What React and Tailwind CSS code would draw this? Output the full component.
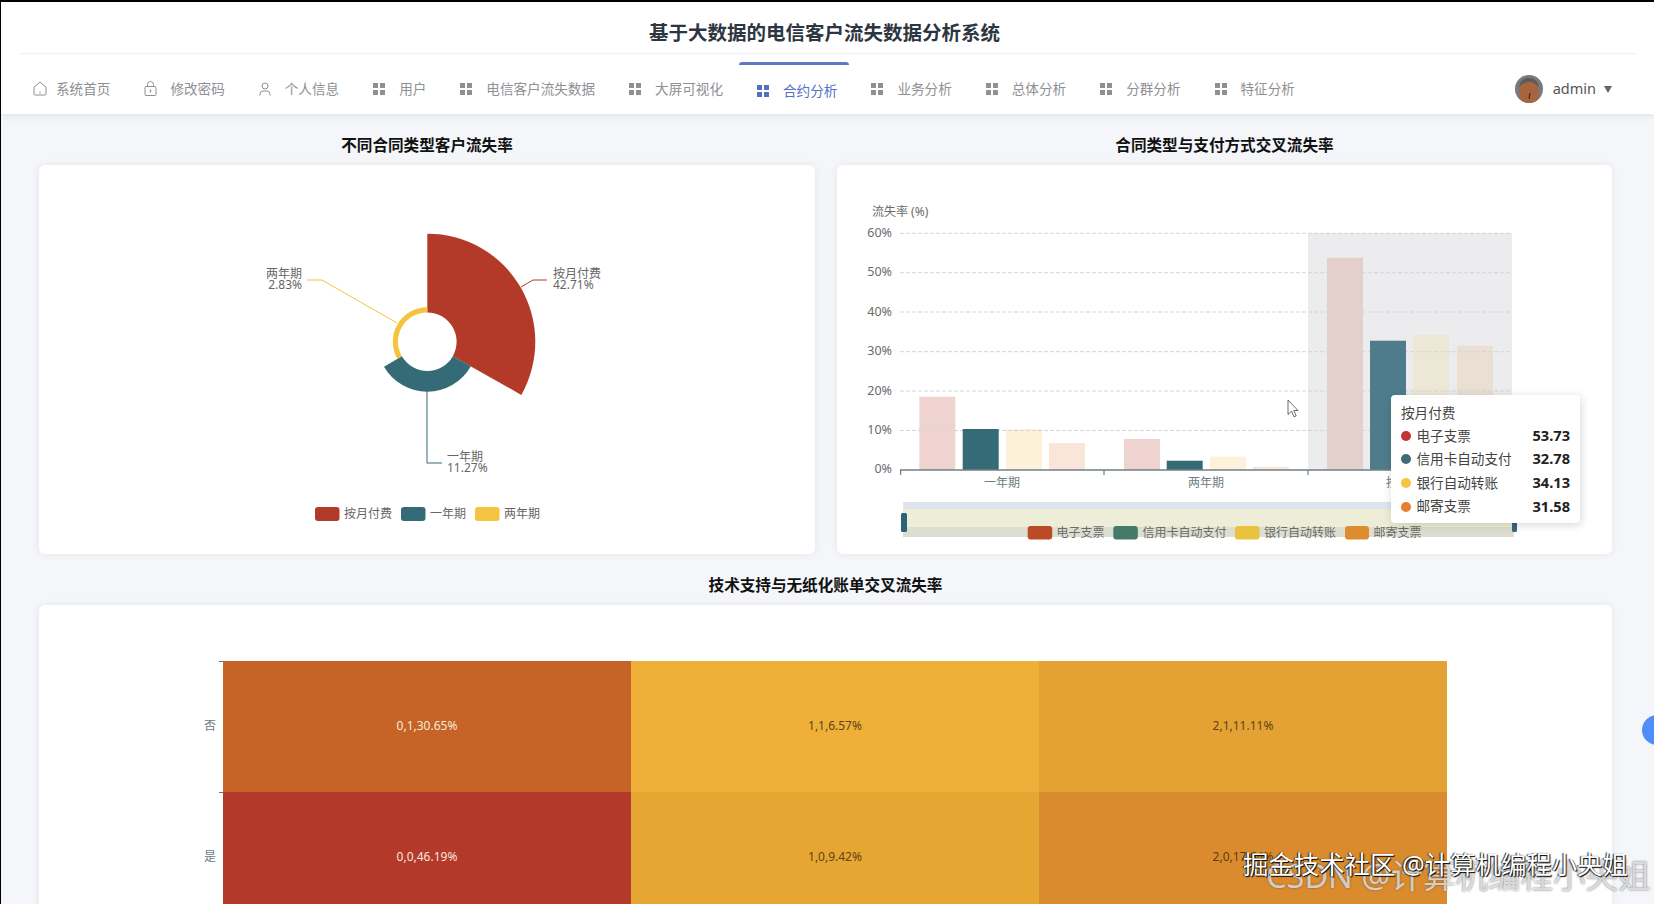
import React from "react";

const CJK = "font-['Noto_Sans','Noto_Sans_CJK_SC',sans-serif]";

function polar(cx, cy, r, deg) {
  const a = (deg * Math.PI) / 180;
  return [cx + r * Math.sin(a), cy - r * Math.cos(a)];
}
function sector(cx, cy, r0, r1, a0, a1) {
  const [x0, y0] = polar(cx, cy, r1, a0);
  const [x1, y1] = polar(cx, cy, r1, a1);
  const [x2, y2] = polar(cx, cy, r0, a1);
  const [x3, y3] = polar(cx, cy, r0, a0);
  return `M${x0} ${y0}A${r1} ${r1} 0 0 1 ${x1} ${y1}L${x2} ${y2}A${r0} ${r0} 0 0 0 ${x3} ${y3}Z`;
}

function GridIcon({ active }) {
  const c = active ? "bg-[#5470c6]" : "bg-[#8e9094]";
  return (
    <span className="grid grid-cols-[5px_5px] grid-rows-[5px_5px] gap-[2px] w-3 h-3 shrink-0">
      <i className={c} />
      <i className={c} />
      <i className={c} />
      <i className={c} />
    </span>
  );
}

function HomeIcon() {
  return (
    <svg width="14" height="15" viewBox="0 0 14 15" fill="none" stroke="#8e9094" strokeWidth="1" className="shrink-0">
      <path d="M1 6.2 7 1l6 5.2V13a1 1 0 0 1-1 1H2a1 1 0 0 1-1-1Z" />
      <path d="M6.4 11.5h1.2" strokeWidth="1.3" />
    </svg>
  );
}
function LockIcon() {
  return (
    <svg width="13" height="15" viewBox="0 0 13 15" fill="none" stroke="#8e9094" strokeWidth="1" className="shrink-0">
      <rect x="1" y="5.5" width="11" height="9" rx="1" />
      <path d="M3.5 5.5V3.5a3 3 0 0 1 6 0v2" />
      <path d="M6.5 8.5v3" strokeWidth="1.3" />
    </svg>
  );
}
function UserIcon() {
  return (
    <svg width="12" height="14" viewBox="0 0 12 14" fill="none" stroke="#8e9094" strokeWidth="1" className="shrink-0">
      <circle cx="6" cy="4" r="3" />
      <path d="M1 13.5V12a3 3 0 0 1 3-3h4a3 3 0 0 1 3 3v1.5" />
    </svg>
  );
}

const tabs = [
  { t: "系统首页", i: <HomeIcon />, gap: "gap-[9px]" },
  { t: "修改密码", i: <LockIcon />, gap: "gap-[13px]" },
  { t: "个人信息", i: <UserIcon />, gap: "gap-[14px]" },
  { t: "用户" },
  { t: "电信客户流失数据" },
  { t: "大屏可视化" },
  { t: "合约分析", active: true },
  { t: "业务分析" },
  { t: "总体分析" },
  { t: "分群分析" },
  { t: "特征分析" },
];

function Header() {
  return (
    <header className="relative z-10 bg-white h-[112px] shadow-[0_2px_8px_rgba(0,0,0,0.09)] shrink-0">
      <div className="mx-[18px] h-[52px] border-b border-[#f1f1f1] flex items-center justify-center">
        <h1 className="text-[19.5px] font-bold text-[#2d3640] leading-none translate-y-[5px] -translate-x-[3px]">
          基于大数据的电信客户流失数据分析系统
        </h1>
      </div>
      <nav className="h-[60px] pl-[32px] pr-[42px] flex items-center text-[13.6px] text-[#8e9094]">
        <ul className="flex items-center gap-[34px] translate-y-[5px]">
          {tabs.map((x) => (
            <li
              key={x.t}
              className={`relative flex items-center ${x.gap || "gap-[14px]"} ${
                x.active ? "text-[#5470c6] translate-y-[2px]" : ""
              }`}
            >
              {x.active && (
                <span className="absolute left-[-18px] right-[-12px] top-[-19px] h-[3px] rounded-t-[3px] bg-[#5f78c8]" />
              )}
              {x.i || <GridIcon active={x.active} />}
              <span>{x.t}</span>
            </li>
          ))}
        </ul>
        <div className="ml-auto flex items-center translate-y-[5px]">
          <svg width="28" height="28" viewBox="0 0 28 28" className="rounded-full shrink-0">
            <rect width="28" height="28" fill="#77797a" />
            <ellipse cx="14" cy="17" rx="10" ry="13" fill="#a7653f" />
            <path d="M4 12Q6 3 14 3Q22 3 24 12Q18 6 12 7Q7 8 4 12Z" fill="#5c5a58" />
            <path d="M15 18l-1 6" stroke="#3a2a20" strokeWidth="1.2" />
          </svg>
          <span className="ml-[10px] text-[14.5px] text-[#555]">admin</span>
          <span className="ml-[8px] w-0 h-0 border-x-[4.5px] border-x-transparent border-t-[7px] border-t-[#666]" />
        </div>
      </nav>
    </header>
  );
}

function PieChart() {
  const c = [427.3, 341.7];
  return (
    <svg viewBox="0 0 776 389" className="block w-full h-full">
      <g transform="translate(-39,-165)" fontSize="12" fill="#666">
        <path d={sector(c[0], c[1], 29.3, 108, 0, 119.5)} fill="#b33a29" />
        <path d={sector(c[0], c[1], 29.3, 50, 119.5, 240)} fill="#356b77" />
        <path d={sector(c[0], c[1], 29.3, 34.5, 240, 360)} fill="#f4c33f" />
        <path d="M521 287 533 280H547" fill="none" stroke="#b33a29" strokeWidth="1" />
        <path d="M427 391V463H442" fill="none" stroke="#356b77" strokeWidth="1" />
        <path d="M397 323 322 280H307" fill="none" stroke="#f4c33f" strokeWidth="1" />
        <text x="553" y="278">按月付费</text>
        <text x="553" y="289">42.71%</text>
        <text x="447" y="461">一年期</text>
        <text x="447" y="472">11.27%</text>
        <text x="302" y="278" textAnchor="end">两年期</text>
        <text x="302" y="289" textAnchor="end">2.83%</text>
        <rect x="315" y="507" width="24.5" height="14" rx="3" fill="#b33a29" />
        <text x="344" y="517.500">按月付费</text>
        <rect x="401" y="507" width="24.5" height="14" rx="3" fill="#356b77" />
        <text x="430" y="517.500">一年期</text>
        <rect x="475" y="507" width="24.5" height="14" rx="3" fill="#f4c33f" />
        <text x="504" y="517.500">两年期</text>
      </g>
    </svg>
  );
}

const yLabels = [
  ["60%", 233.3],
  ["50%", 272.7],
  ["40%", 312],
  ["30%", 351.7],
  ["20%", 391],
  ["10%", 430.5],
];

function BarChart() {
  const faded = [
    [919.3, 396.7, "#efd3ce"],
    [1006, 429, "#fdf2d9"],
    [1049, 443, "#fae5da"],
    [1124, 439, "#efd3ce"],
    [1210, 456.7, "#fdf2d9"],
    [1252.7, 466.7, "#fae5da"],
    [1327, 257.7, "#e3cfcc"],
    [1413, 335, "#ede8d6"],
    [1457, 345.7, "#ebdfd3"],
  ];
  const solid = [
    [962.7, 429, "#356b77"],
    [1166.7, 460.7, "#356b77"],
    [1370, 340.7, "#4f7c8c"],
  ];
  return (
    <svg viewBox="0 0 775 389" className="block w-full h-full">
      <g transform="translate(-837,-165)" fontSize="12" fill="#6b6b6b">
        <text x="872" y="216">流失率 (%)</text>
        <rect x="1308" y="233" width="204" height="237" fill="#ececee" />
        {faded.map(([x, y, f]) => (
          <rect key={x} x={x} y={y} width="36" height={470 - y} fill={f} />
        ))}
        {yLabels.map(([t, y]) => (
          <g key={t}>
            <line x1="900" x2="1512" y1={y} y2={y} stroke="#d6d6d6" strokeDasharray="4 2" />
            <text x="892" y={y + 3.5} textAnchor="end" fontSize="12.500">{t}</text>
          </g>
        ))}
        <text x="892" y="473" textAnchor="end" fontSize="12.500">0%</text>
        {solid.map(([x, y, f]) => (
          <rect key={x} x={x} y={y} width="36" height={470 - y} fill={f} />
        ))}
        <line x1="900" x2="1512" y1="470" y2="470" stroke="#6e8088" strokeWidth="1.6" />
        {[900.7, 1104, 1308, 1512].map((x) => (
          <line key={x} x1={x} x2={x} y1="470" y2="475" stroke="#55666c" />
        ))}
        <text x="1002" y="486.500" textAnchor="middle" fill="#6f7d82">一年期</text>
        <text x="1206" y="486.500" textAnchor="middle" fill="#6f7d82">两年期</text>
        <text x="1410" y="486.500" textAnchor="middle" fill="#6f7d82">按月付费</text>

        <rect x="903" y="502" width="611" height="7" fill="#dfe4ef" />
        <rect x="903" y="509" width="611" height="18" fill="#eeeed8" />
        <rect x="903" y="527" width="611" height="10" fill="#dcdfcf" />
        <rect x="901" y="513" width="6" height="19" rx="1.500" fill="#2c6376" />
        <rect x="1512" y="513" width="5" height="19" rx="1.500" fill="#3d6480" />

        <rect x="1027.700" y="526" width="24.500" height="13.500" rx="3" fill="#bb4a28" />
        <text x="1056.500" y="537">电子支票</text>
        <rect x="1113.300" y="526" width="24.500" height="13.500" rx="3" fill="#457a68" />
        <text x="1142.500" y="537">信用卡自动支付</text>
        <rect x="1235" y="526" width="24.500" height="13.500" rx="3" fill="#e9c33f" />
        <text x="1264" y="537">银行自动转账</text>
        <rect x="1345" y="526" width="24" height="13.500" rx="3" fill="#dd8c30" />
        <text x="1373.500" y="537">邮寄支票</text>

        <path
          d="M1288 400V414.500L1291.500 411.200 1294 416.800 1296.200 415.800 1293.800 410.500H1298Z"
          fill="#fff"
          stroke="#444"
          strokeWidth="0.8"
        />
      </g>
    </svg>
  );
}

const tipRows = [
  ["电子支票", "53.73", "bg-[#c23531]"],
  ["信用卡自动支付", "32.78", "bg-[#3f6b78]"],
  ["银行自动转账", "34.13", "bg-[#f6c343]"],
  ["邮寄支票", "31.58", "bg-[#e5802b]"],
];

function Tooltip() {
  return (
    <div className="absolute left-[554px] top-[230px] w-[189px] h-[128px] bg-white rounded-[4px] shadow-[1px_2px_10px_rgba(0,0,0,0.16)] px-[10px] pt-[7px] text-[13.6px] text-[#444]">
      <div className="h-[22px] leading-[22px]">按月付费</div>
      {tipRows.map(([n, v, c]) => (
        <div key={n} className="flex items-center h-[23.6px]">
          <span className={`w-[10px] h-[10px] rounded-full ${c}`} />
          <span className="ml-[5.5px]">{n}</span>
          <span className="ml-auto text-[14.6px] font-bold text-[#222]">{v}</span>
        </div>
      ))}
    </div>
  );
}

const heat = [
  ["否", [["0,1,30.65%", "bg-[#c56426]", "text-[#fbe8d8]"], ["1,1,6.57%", "bg-[#efb039]", "text-[#5e4415]"], ["2,1,11.11%", "bg-[#e3a233]", "text-[#5e4415]"]]],
  ["是", [["0,0,46.19%", "bg-[#b3392a]", "text-[#fbe4dc]"], ["1,0,9.42%", "bg-[#e6a632]", "text-[#5e4415]"], ["2,0,17.64%", "bg-[#da8b2d]", "text-[#5e3c12]"]]],
];

function Heatmap() {
  return (
    <div className="pt-[56px] grid grid-cols-[184px_408px_408px_408px] auto-rows-[130.5px] text-[12px]">
      {heat.map(([label, cells]) => (
        <React.Fragment key={label}>
          <div className="flex justify-end items-stretch gap-[3px] text-[#6b7b80]">
            <span className="self-center">{label}</span>
            <span className="w-[4px] border-t border-[#6e7079]" />
          </div>
          {cells.map(([t, bg, fg]) => (
            <div key={t} className={`${bg} ${fg} flex items-center justify-center`}>
              {t}
            </div>
          ))}
        </React.Fragment>
      ))}
    </div>
  );
}

function Panel({ title, className = "", children }) {
  return (
    <section className={`flex flex-col min-w-0 ${className}`}>
      <h2 className="h-[51px] pt-[12px] flex items-center justify-center text-[15.6px] font-bold text-[#111]">{title}</h2>
      {children}
    </section>
  );
}

const card = "relative bg-white rounded-[6px] shadow-[0_0_8px_rgba(0,0,0,0.07)]";

export default function App() {
  return (
    <div className={`relative w-[1654px] h-[904px] overflow-hidden bg-[#f4f6fa] border-t-2 border-l border-black flex flex-col ${CJK}`}>
      <Header />
      <main className="flex-1 pl-[38px] pr-[42px]">
        <div className="grid grid-cols-[776px_775px] gap-x-[22px]">
          <Panel title="不同合同类型客户流失率">
            <div className={`${card} h-[389px]`}>
              <PieChart />
            </div>
          </Panel>
          <Panel title="合同类型与支付方式交叉流失率">
            <div className={`${card} h-[389px]`}>
              <BarChart />
              <Tooltip />
            </div>
          </Panel>
        </div>
        <Panel title="技术支持与无纸化账单交叉流失率">
          <div className={`${card} h-[320px] overflow-hidden`}>
            <Heatmap />
          </div>
        </Panel>
      </main>

      <span className="absolute left-[1641px] top-[713px] w-[30px] h-[30px] rounded-full bg-[#4f8df7]" />
      <span className="absolute left-[1265px] top-[858px] whitespace-nowrap text-[32.5px] leading-none text-white/70 [text-shadow:0_0_2px_rgba(70,70,70,0.8)]">
        CSDN @计算机编程小央姐
      </span>
      <span className="absolute left-[1242px] top-[850px] whitespace-nowrap text-[25.4px] leading-none text-white [text-shadow:1px_1px_1px_#000,-1px_0_1px_#222]">
        掘金技术社区 @计算机编程小央姐
      </span>
    </div>
  );
}
